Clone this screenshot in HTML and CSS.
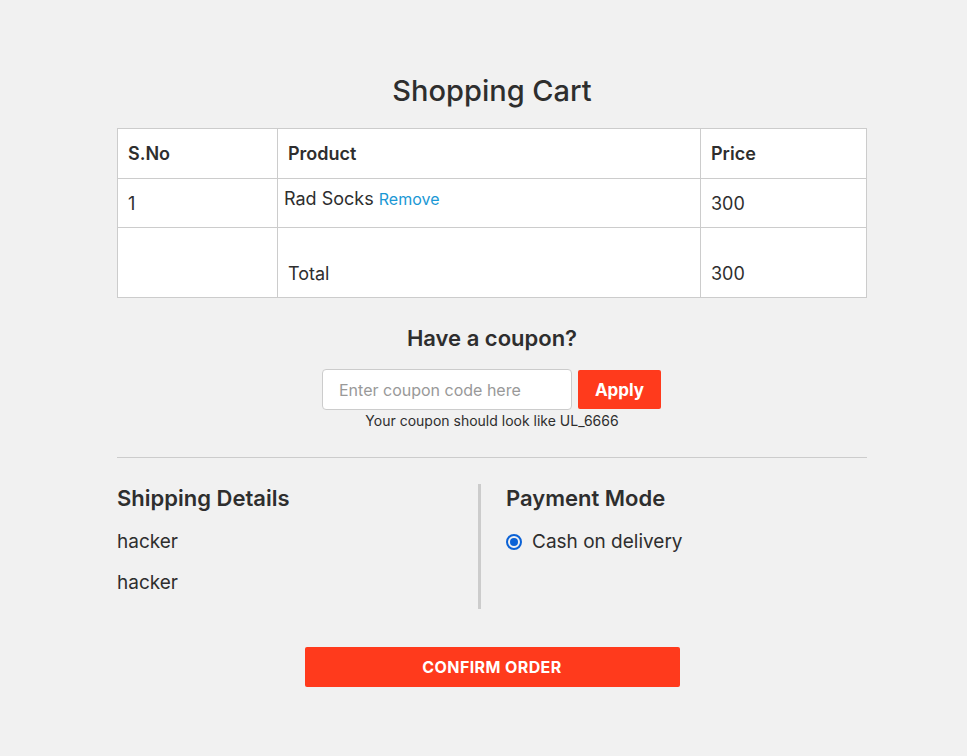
FILE: index.html
```html
<!DOCTYPE html>
<html lang="en">
<head>
<meta charset="utf-8">
<title>Shopping Cart</title>
<link rel="stylesheet" href="styles.css">
</head>
<body>
<div class="page">
  <h1 class="title">Shopping Cart</h1>
  <table class="cart">
    <colgroup>
      <col class="c1"><col class="c2"><col class="c3">
    </colgroup>
    <thead>
      <tr class="head"><th>S.No</th><th>Product</th><th>Price</th></tr>
    </thead>
    <tbody>
      <tr class="item">
        <td>1</td>
        <td class="prod">Rad Socks <a class="remove" href="#">Remove</a></td>
        <td>300</td>
      </tr>
      <tr class="total">
        <td></td>
        <td>Total</td>
        <td>300</td>
      </tr>
    </tbody>
  </table>

  <section class="coupon">
    <h2 class="coupon-title">Have a coupon?</h2>
    <div class="coupon-row">
      <input class="coupon-input" type="text" placeholder="Enter coupon code here">
      <button class="apply">Apply</button>
    </div>
    <p class="hint">Your coupon should look like UL_6666</p>
  </section>

  <hr class="sep">

  <div class="details">
    <div class="shipping">
      <h3 class="sub">Shipping Details</h3>
      <p class="line">hacker</p>
      <p class="line last">hacker</p>
    </div>
    <div class="payment">
      <h3 class="sub">Payment Mode</h3>
      <label class="radio"><span class="dot"></span>Cash on delivery</label>
    </div>
  </div>

  <div class="confirm-wrap">
    <button class="confirm">CONFIRM ORDER</button>
  </div>
</div>
</body>
</html>
```

FILE: styles.css
```css
* { box-sizing: border-box; }
html, body { margin: 0; padding: 0; }
body {
  background: #f1f1f1;
  font-family: "Inter", "Liberation Sans", sans-serif;
  color: #2e2e2e;
  padding-left: 17px;
}
.page {
  width: 750px;
  margin: 0 auto;
  padding-top: 74px;
}
.title {
  margin: 0 0 20px;
  text-align: center;
  font-size: 29px;
  font-weight: 500;
  line-height: 34px;
}
.cart {
  width: 749px;
  border-collapse: collapse;
  background: #fff;
  table-layout: fixed;
}
.c1 { width: 160px; }
.c2 { width: 423px; }
.c3 { width: 166px; }
.cart th, .cart td {
  border: 1px solid #cccccc;
  text-align: left;
  padding: 0 10px;
  font-size: 18px;
}
.cart th { font-weight: 600; height: 50px; }
.item td { height: 49px; padding-top: 1px; }
.item td.prod { vertical-align: top; padding: 9px 6px 0; }
.total td { height: 70px; vertical-align: bottom; padding-bottom: 13px; }
.remove {
  color: #1b98d5;
  text-decoration: none;
  font-size: 16px;
}
.coupon { text-align: center; padding-top: 27px; }
.coupon-title {
  margin: 0 0 18px;
  font-size: 22px;
  font-weight: 600;
  line-height: 26px;
}
.coupon-row {
  display: flex;
  justify-content: center;
  gap: 6px;
  margin-left: -1px;
}
.coupon-input {
  width: 250px;
  height: 41px;
  border: 1px solid #cccccc;
  border-radius: 4px;
  padding: 0 16px;
  font-family: inherit;
  font-size: 16px;
  color: #333;
  background: #fff;
}
.coupon-input::placeholder { color: #999; }
.apply {
  width: 83px;
  height: 39px;
  margin-top: 1px;
  border: none;
  border-radius: 2px;
  background: #ff3a1c;
  color: #fff;
  font-family: inherit;
  font-weight: 700;
  font-size: 17px;
}
.hint {
  margin: 2px 0 0;
  font-size: 14px;
  line-height: 18px;
}
.sep {
  border: none;
  border-top: 1px solid #cccccc;
  margin: 27px 0 26px;
}
.details { display: flex; }
.shipping {
  width: 364px;
  border-right: 3px solid #cccccc;
}
.payment { padding-left: 25px; }
.sub {
  margin: 0 0 18px;
  font-size: 22px;
  font-weight: 600;
  line-height: 28px;
}
.line {
  margin: 0 0 17px;
  font-size: 19px;
  line-height: 24px;
}
.line.last { margin-bottom: 14px; }
.radio {
  display: flex;
  align-items: center;
  font-size: 19px;
  line-height: 24px;
}
.dot {
  width: 16px;
  height: 16px;
  border-radius: 50%;
  border: 2px solid #0b62d6;
  margin-right: 10px;
  position: relative;
  flex: none;
}
.dot::after {
  content: "";
  position: absolute;
  left: 2px; top: 2px;
  width: 8px; height: 8px;
  border-radius: 50%;
  background: #0b62d6;
}
.confirm-wrap { display: flex; justify-content: center; padding-top: 38px; }
.confirm {
  width: 375px;
  height: 40px;
  border: none;
  border-radius: 2px;
  background: #ff3a1c;
  color: #fff;
  font-family: inherit;
  font-weight: 700;
  font-size: 16px;
  letter-spacing: 0.4px;
}
```
